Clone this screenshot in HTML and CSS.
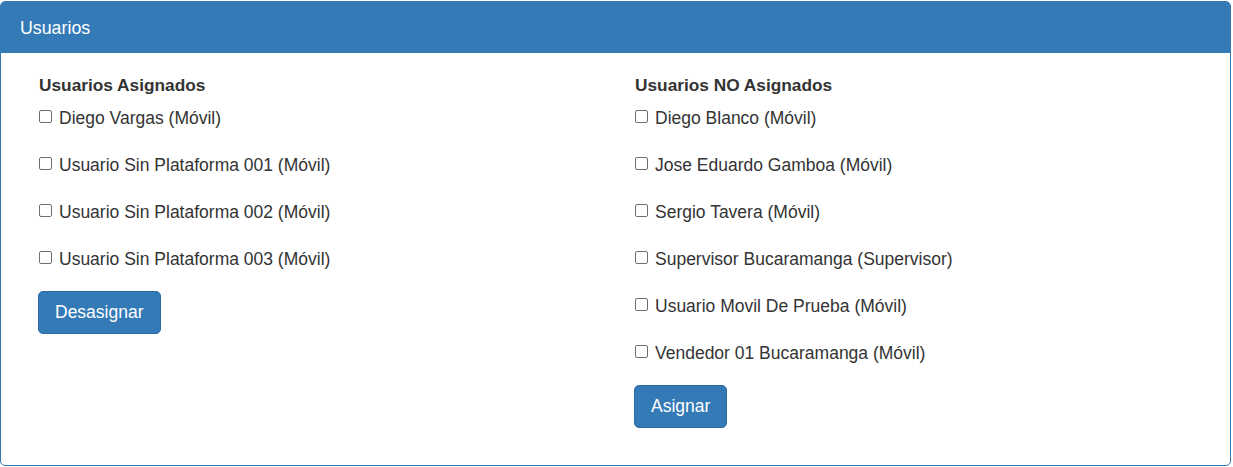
FILE: index.html
```html
<!DOCTYPE html>
<html lang="es">
<head>
<meta charset="utf-8">
<title>Usuarios</title>
<link rel="stylesheet" href="styles.css">
</head>
<body>
<div class="panel">
  <div class="panel-heading">Usuarios</div>
  <div class="panel-body">
    <div class="col">
      <h4 class="col-title">Usuarios Asignados</h4>
      <label class="check"><input type="checkbox"><span>Diego Vargas (Móvil)</span></label>
      <label class="check"><input type="checkbox"><span>Usuario Sin Plataforma 001 (Móvil)</span></label>
      <label class="check"><input type="checkbox"><span>Usuario Sin Plataforma 002 (Móvil)</span></label>
      <label class="check"><input type="checkbox"><span>Usuario Sin Plataforma 003 (Móvil)</span></label>
      <button class="btn" type="button">Desasignar</button>
    </div>
    <div class="col">
      <h4 class="col-title">Usuarios NO Asignados</h4>
      <label class="check"><input type="checkbox"><span>Diego Blanco (Móvil)</span></label>
      <label class="check"><input type="checkbox"><span>Jose Eduardo Gamboa (Móvil)</span></label>
      <label class="check"><input type="checkbox"><span>Sergio Tavera (Móvil)</span></label>
      <label class="check"><input type="checkbox"><span>Supervisor Bucaramanga (Supervisor)</span></label>
      <label class="check"><input type="checkbox"><span>Usuario Movil De Prueba (Móvil)</span></label>
      <label class="check"><input type="checkbox"><span>Vendedor 01 Bucaramanga (Móvil)</span></label>
      <button class="btn" type="button">Asignar</button>
    </div>
  </div>
</div>
</body>
</html>
```

FILE: styles.css
```css
html, body {
  margin: 0;
  padding: 0;
  background: #fff;
}
body {
  padding: 1px 2px 0 0;
  font-family: "Liberation Sans", Arial, sans-serif;
  color: #333;
  font-size: 17.5px;
}
.panel {
  border: 1px solid #337ab7;
  border-radius: 5px;
  background: #fff;
  overflow: hidden;
}
.panel-heading {
  background: #337ab7;
  color: #fff;
  font-size: 17.8px;
  line-height: 24px;
  padding: 14px 19px 13px;
}
.panel-body {
  display: grid;
  grid-template-columns: 596px 1fr;
  padding: 20px 0 37px 37px;
}
.col {
  display: flex;
  flex-direction: column;
  align-items: flex-start;
}
.col-title {
  margin: 0 0 9px 1px;
  font-size: 17.3px;
  font-weight: bold;
  line-height: 24px;
}
.check {
  display: flex;
  align-items: center;
  height: 24px;
  margin-bottom: 23px;
  line-height: 24px;
  cursor: pointer;
}
.check:last-of-type {
  margin-bottom: 20px;
}
.check input {
  appearance: none;
  -webkit-appearance: none;
  width: 13px;
  height: 13px;
  margin: -3px 7px 0 1px;
  border: 1px solid #6f6f6f;
  border-radius: 2px;
  background: #fff;
  box-sizing: border-box;
}
.btn {
  font-family: inherit;
  font-size: 17.5px;
  line-height: 24px;
  color: #fff;
  background: #337ab7;
  border: 1px solid #2e6da4;
  border-radius: 5px;
  padding: 8px 16px 9px;
  cursor: pointer;
}
```
